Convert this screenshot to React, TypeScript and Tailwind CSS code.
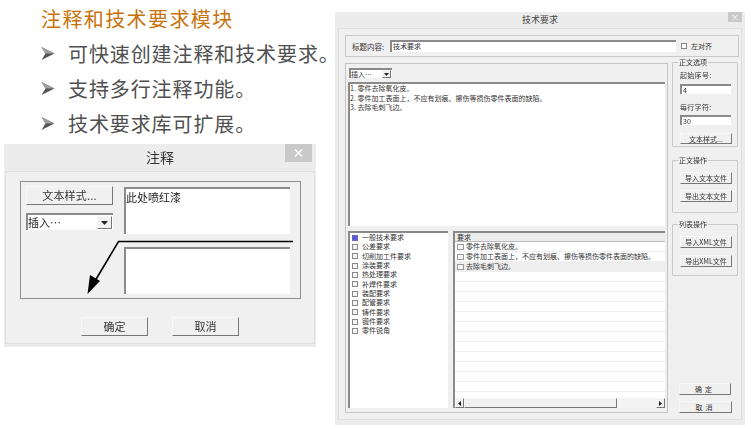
const font = "font-['Noto_Sans_CJK_SC','Liberation_Sans',sans-serif]"

const bullets = ["可快速创建注释和技术要求。", "支持多行注释功能。", "技术要求库可扩展。"]
const categories = [
  "一般技术要求",
  "公差要求",
  "切削加工件要求",
  "涂装要求",
  "热处理要求",
  "补焊件要求",
  "装配要求",
  "配管要求",
  "铸件要求",
  "锻件要求",
  "零件锐角",
]
const requirements = ["零件去除氧化皮。", "零件加工表面上，不应有划痕、擦伤等损伤零件表面的缺陷。", "去除毛刺飞边。"]

function Sunken({ className = "", children }: { className?: string; children?: React.ReactNode }) {
  return (
    <div className={`border-t-2 border-l-2 border-t-[#8a8a8a] border-l-[#8a8a8a] bg-white ${className}`}>{children}</div>
  )
}

function Raised({ className = "", children }: { className?: string; children?: React.ReactNode }) {
  return (
    <div
      className={`flex items-center justify-center border-r border-b border-t border-l border-t-[#f8f8f8] border-l-[#f8f8f8] border-r-[#777] border-b-[#777] bg-[#f0f0f0] text-[#333] ${className}`}
    >
      {children}
    </div>
  )
}

function Arrow() {
  return (
    <svg width="14" height="15" viewBox="0 0 14 15" className="shrink-0">
      <path d="M0.5 1 L13.5 7.5 L0.5 14 L4.5 7.5 Z" fill="#555" />
      <path d="M0.5 1 L13.5 7.5 L4.5 7.5 Z" fill="#a0a0a0" />
    </svg>
  )
}

function GroupBox({ title, className = "", children }: { title: string; className?: string; children?: React.ReactNode }) {
  return (
    <div className={`relative w-[66px] rounded-[1px] border border-[#c8c8c8] ${className}`}>
      <span className="absolute -top-[6px] left-[5px] bg-[#f0f0f0] px-px text-[7px] leading-[10px] text-[#333]">{title}</span>
      {children}
    </div>
  )
}

function NoteDialog() {
  return (
    <div className="ml-[4px] h-[203px] w-[312px] bg-[#ececec] blur-[0.35px]">
      <div className="relative flex h-[27px] items-center justify-center text-[14px] text-[#333]">
        注释
        <span className="absolute top-0 right-[4px] flex h-[18px] w-[27px] items-center justify-center bg-[#c9c9c9] text-[12px] leading-none font-bold text-white">
          ×
        </span>
      </div>
      <div className="mx-[1px] h-[173px] border border-[#dfdfdf] bg-[#f0f0f0] pt-[9px] pl-[14px]">
        <div className="relative flex h-[118px] w-[281px] gap-[11px] border border-[#8f8f8f] pt-[4px] pl-[5px]">
          <div className="flex w-[87px] flex-col gap-[8px]">
            <Raised className="h-[19px] text-[11px] tracking-[0.2px]">文本样式...</Raised>
            <Sunken className="flex h-[17px] items-center justify-between pr-[1px] text-[11px] leading-none whitespace-nowrap text-[#222]">
              插入…
              <Raised className="h-[13px] w-[15px]">
                <svg width="7" height="4" viewBox="0 0 7 4">
                  <path d="M0 0 H7 L3.5 4 Z" fill="#222" />
                </svg>
              </Raised>
            </Sunken>
          </div>
          <div className="flex w-[166px] flex-col gap-[13px] pt-[1px]">
            <Sunken className="h-[47px] text-[11px] leading-[16px] text-[#222]">此处喷红漆</Sunken>
            <Sunken className="h-[47px]" />
          </div>
          <svg width="230" height="60" viewBox="0 0 230 60" className="absolute top-[55px] left-[44px] overflow-visible">
            <path d="M228 4.5 H53.5 L30 44" fill="none" stroke="#000" strokeWidth="1.6" />
            <path d="M22.5 57 L25 38 L35 44 Z" fill="#000" />
          </svg>
        </div>
        <div className="mt-[18px] flex gap-[24px] pl-[61px] text-[11px]">
          <Raised className="h-[19px] w-[67px]">确定</Raised>
          <Raised className="h-[19px] w-[67px]">取消</Raised>
        </div>
      </div>
    </div>
  )
}

function RequirementsDialog() {
  return (
    <div className="mt-[12px] h-[413px] w-[410px] bg-[#ececec] text-[7px] leading-[10px] blur-[0.35px]">
      <div className="relative flex h-[16px] items-center justify-center text-[9px] text-[#444]">
        技术要求
        <span className="absolute top-0 right-[3px] flex h-[10px] w-[14px] items-center justify-center bg-[#c9c9c9] text-[8px] leading-none text-white">
          ×
        </span>
      </div>
      <div className="mx-[3px] h-[392px] border border-[#dfdfdf] bg-[#f0f0f0] pt-[6px] pl-[6px]">
        <div className="flex h-[22px] w-[394px] items-center border border-[#c8c8c8] pl-[6px] text-[#333]">
          <span className="w-[38px] pt-[2px] text-[7.5px]">标题内容:</span>
          <Sunken className="h-[12px] w-[286px] pl-[1px] leading-[9px]">技术要求</Sunken>
          <span className="ml-[5px] h-[6px] w-[6px] border border-[#888] bg-white" />
          <span className="ml-[4px]">左对齐</span>
        </div>
        <div className="mt-[5px] flex gap-[4px]">
          <div className="mt-px h-[350px] w-[323px] border border-[#c4c4c4] pt-[4px] pl-[2px]">
            <Sunken className="ml-[1px] flex h-[10px] w-[43px] items-center justify-between pr-[1px] leading-[8px] whitespace-nowrap text-[#333]">
              插入…
              <Raised className="h-[8px] w-[9px]">
                <svg width="5" height="3" viewBox="0 0 5 3">
                  <path d="M0 0 H5 L2.5 3 Z" fill="#222" />
                </svg>
              </Raised>
            </Sunken>
            <Sunken className="mt-[4px] h-[144px] w-[317px] leading-[9.5px] text-[#333]">
              <p>1. 零件去除氧化皮。</p>
              <p>2. 零件加工表面上，不应有划痕、擦伤等损伤零件表面的缺陷。</p>
              <p>3. 去除毛刺飞边。</p>
            </Sunken>
            <div className="mt-[5px] flex gap-[5px]">
              <Sunken className="h-[177px] w-[100px] pl-[2px] text-[#333]">
                {categories.map((name, i) => (
                  <div key={name} className="flex h-[9.33px] items-center gap-[3px] leading-none">
                    <span className={`h-[6px] w-[6px] shrink-0 border ${i === 0 ? "border-[#6b6bb5] bg-[#5a5ae0]" : "border-[#888] bg-[#f4f4f4]"}`} />
                    <span className="ml-px">{name}</span>
                  </div>
                ))}
              </Sunken>
              <Sunken className="flex h-[177px] w-[212px] flex-col">
                <div className="h-[9px] shrink-0 border-b border-b-[#bbb] bg-[#ececec] pl-[2px] leading-[8px] text-[#333]">要求</div>
                <div className="flex-1 overflow-hidden">
                  {Array.from({ length: 15 }).map((_, i) => (
                    <div
                      key={i}
                      className={`flex h-[10px] items-center gap-[2px] border-b border-b-[#efefef] pl-[2px] leading-none text-[#333] ${i === 2 ? "bg-[#eeeeee]" : ""}`}
                    >
                      {requirements[i] && (
                        <>
                          <span className="h-[6px] w-[7px] shrink-0 border border-[#999] bg-[#f4f4f4]" />
                          {requirements[i]}
                        </>
                      )}
                    </div>
                  ))}
                </div>
                <div className="flex h-[10px] shrink-0 bg-[#f4f4f4]">
                  <Raised className="h-[10px] w-[9px]">
                    <svg width="3" height="5" viewBox="0 0 3 5">
                      <path d="M3 0 V5 L0 2.5 Z" fill="#222" />
                    </svg>
                  </Raised>
                  <Raised className="h-[10px] w-[153px]" />
                  <div className="flex-1" />
                  <Raised className="h-[10px] w-[9px]">
                    <svg width="3" height="5" viewBox="0 0 3 5">
                      <path d="M0 0 V5 L3 2.5 Z" fill="#222" />
                    </svg>
                  </Raised>
                </div>
              </Sunken>
            </div>
          </div>
          <div className="flex w-[66px] flex-col text-[#333]">
            <GroupBox title="正文选项" className="h-[85px] px-[7px] pt-[7px]">
              <p className="tracking-[0.3px]">起始序号:</p>
              <Sunken className="mt-[4px] h-[10px] w-[51px] pl-px leading-[8px]">4</Sunken>
              <p className="mt-[8px] tracking-[0.3px]">每行字符:</p>
              <Sunken className="mt-[3px] h-[10px] w-[51px] pl-px leading-[8px]">30</Sunken>
              <Raised className="mt-[8px] h-[11px] w-[52px]">文本样式...</Raised>
            </GroupBox>
            <GroupBox title="正文操作" className="mt-[13px] h-[53px] px-[7px] pt-[11px]">
              <Raised className="h-[12px] w-[52px]">导入文本文件</Raised>
              <Raised className="mt-[6px] h-[12px] w-[52px]">导出文本文件</Raised>
            </GroupBox>
            <GroupBox title="列表操作" className="mt-[11px] h-[52px] px-[7px] pt-[11px]">
              <Raised className="h-[12px] w-[52px]">导入XML文件</Raised>
              <Raised className="mt-[7px] h-[12px] w-[52px]">导出XML文件</Raised>
            </GroupBox>
            <Raised className="mt-[107px] ml-[7px] h-[12px] w-[52px] tracking-[3px]">确定</Raised>
            <Raised className="mt-[6px] ml-[7px] h-[12px] w-[53px] tracking-[3px]">取消</Raised>
          </div>
        </div>
      </div>
    </div>
  )
}

export default function App() {
  return (
    <div className={`flex h-[429px] w-[752px] overflow-hidden bg-white ${font}`}>
      <div className="w-[335px] shrink-0">
        <div className="h-[144px] pt-[7px] pl-[41px]">
          <h1 className="text-[20px] leading-[24px] font-normal tracking-[1.4px] text-[#c8720a]">注释和技术要求模块</h1>
          <ul className="mt-[10px] flex flex-col gap-[10px]">
            {bullets.map((text) => (
              <li key={text} className="flex h-[25px] items-center text-[20px] tracking-[0.9px] whitespace-nowrap text-[#505050]">
                <Arrow />
                <span className="ml-[13px]">{text}</span>
              </li>
            ))}
          </ul>
        </div>
        <NoteDialog />
      </div>
      <RequirementsDialog />
    </div>
  )
}
